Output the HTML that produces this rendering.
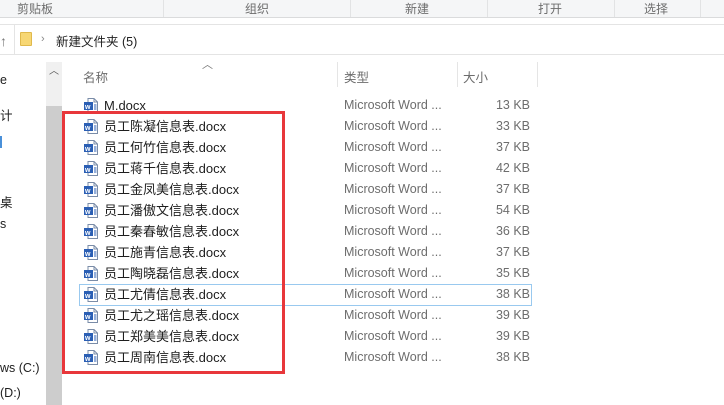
<!DOCTYPE html>
<html><head><meta charset="utf-8"><style>
*{margin:0;padding:0;box-sizing:border-box}
body{width:724px;height:405px;overflow:hidden;background:#fff;font-family:"Liberation Sans","Noto Sans CJK SC",sans-serif;font-size:12px;color:#1e1e1e;position:relative}
.a{position:absolute;white-space:nowrap}
.rib{position:absolute;left:0;top:0;width:724px;height:18px;background:#f5f6f7;border-bottom:1px solid #dadbdc}
.sep{position:absolute;top:0;width:1px;height:17px;background:#e2e3e4}
.g{color:#6d6d6d}
.row{position:absolute;left:79px;width:453px;height:21px;line-height:21px}
.ic{position:absolute;left:5px;top:3px;width:14px;height:15px}
.nm{position:absolute;left:25px;top:0;font-size:13px;color:#1e1e1e}
.ty{position:absolute;left:265px;top:0;color:#6d6d6d;font-size:12.5px}
.sz{position:absolute;right:2px;top:0;color:#6d6d6d;font-size:12.5px}
</style></head><body>
<div class="rib">
<div class="a g" style="left:17px;top:0;font-size:12px">剪贴板</div>
<div class="sep" style="left:163px"></div>
<div class="a g" style="left:245px;top:0">组织</div>
<div class="sep" style="left:350px"></div>
<div class="a g" style="left:405px;top:0">新建</div>
<div class="sep" style="left:487px"></div>
<div class="a g" style="left:538px;top:0">打开</div>
<div class="sep" style="left:614px"></div>
<div class="a g" style="left:644px;top:0">选择</div>
<div class="sep" style="left:700px"></div>
</div>
<div class="a" style="left:0;top:24px;width:724px;height:31px;border-top:1px solid #e4e4e4;border-bottom:1px solid #e4e4e4"></div>
<div class="a" style="left:14px;top:24px;width:1px;height:31px;background:#e4e4e4"></div>
<div class="a" style="left:0;top:33px;font-size:14px;color:#777">↑</div>
<div class="a" style="left:20px;top:32px;width:12px;height:14px;background:#f7d774;border:1px solid #e0b94c;border-radius:1px"></div>
<div class="a" style="left:41px;top:33px;color:#888;font-size:11px">›</div>
<div class="a" style="left:56px;top:31px;font-size:12.5px">新建文件夹 (5)</div>
<div class="a" style="left:0;top:73px;font-size:12.5px">e</div>
<div class="a" style="left:0;top:105px;font-size:12.5px">计</div>
<div class="a" style="left:0;top:136px;width:2px;height:12px;background:#4a90d9"></div>
<div class="a" style="left:0;top:192px;font-size:12.5px">桌</div>
<div class="a" style="left:0;top:217px;font-size:12.5px">s</div>
<div class="a" style="left:0;top:361px;font-size:12.5px">ws (C:)</div>
<div class="a" style="left:0;top:386px;font-size:12.5px">(D:)</div>
<div class="a" style="left:46px;top:62px;width:16px;height:343px;background:#f0f0f0"></div>
<div class="a" style="left:46px;top:106px;width:16px;height:299px;background:#cdcdcd"></div>
<div class="a" style="left:49px;top:62px;font-size:10px;color:#555">︿</div>
<div class="a" style="left:202px;top:56px;font-size:11px;color:#777">︿</div>
<div class="a g" style="left:83px;top:67px;font-size:12.5px">名称</div>
<div class="a" style="left:337px;top:62px;width:1px;height:25px;background:#e5e5e5"></div>
<div class="a g" style="left:344px;top:67px;font-size:12.5px">类型</div>
<div class="a" style="left:457px;top:62px;width:1px;height:25px;background:#e5e5e5"></div>
<div class="a g" style="left:463px;top:67px;font-size:12.5px">大小</div>
<div class="a" style="left:537px;top:62px;width:1px;height:25px;background:#e5e5e5"></div>
<svg width="0" height="0" style="position:absolute"><defs><g id="w"><path d="M4 0.5H10L13.5 4V14.5H4Z" fill="#fff" stroke="#7a8ca8"/><path d="M10 0.5V4H13.5" fill="none" stroke="#7a8ca8"/><rect x="0" y="4" width="9" height="8" fill="#2b5fb4"/><text x="1" y="11" font-size="7" fill="#fff" font-family="Liberation Sans" font-weight="bold">w</text><path d="M10 7h2.5M10 9h2.5M10 11h2.5" stroke="#2b5fb4" stroke-width="1"/></g></defs></svg>
<div id="rows"></div>
<div class="a" style="left:79px;top:284px;width:453px;height:22px;border:1px solid #99c9ef"></div>
<div class="a" style="left:62px;top:111px;width:223px;height:263px;border:3px solid #e8373b"></div>
<script>
var d=[["M.docx",13],["员工陈凝信息表.docx",33],["员工何竹信息表.docx",37],["员工蒋千信息表.docx",42],["员工金凤美信息表.docx",37],["员工潘傲文信息表.docx",54],["员工秦春敏信息表.docx",36],["员工施青信息表.docx",37],["员工陶晓磊信息表.docx",35],["员工尤倩信息表.docx",38],["员工尤之瑶信息表.docx",39],["员工郑美美信息表.docx",39],["员工周南信息表.docx",38]];
var h="";d.forEach(function(r,i){var t=95+i*21;h+='<div class="row" style="top:'+t+'px"><svg class="ic" viewBox="0 0 14 15"><use href="#w"/></svg><div class="nm">'+r[0]+'</div><div class="ty">Microsoft Word ...</div><div class="sz">'+r[1]+' KB</div></div>';});
document.getElementById("rows").innerHTML=h;
</script>
</body></html>
